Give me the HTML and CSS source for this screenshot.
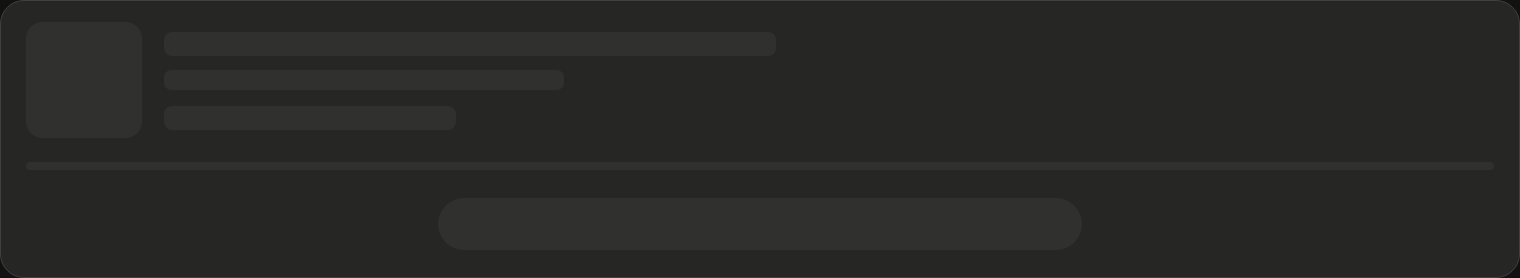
FILE: index.html
```html
<!DOCTYPE html>
<html lang="en">
<head>
<meta charset="utf-8">
<title>Loading</title>
<link rel="stylesheet" href="styles.css">
</head>
<body>
<div class="card" aria-busy="true">
  <div class="head">
    <div class="sk avatar"></div>
    <div class="lines">
      <div class="sk line l1"></div>
      <div class="sk line l2"></div>
      <div class="sk line l3"></div>
    </div>
  </div>
  <div class="sk divider"></div>
  <div class="actions">
    <div class="sk button"></div>
  </div>
</div>
</body>
</html>
```

FILE: styles.css
```css
html, body {
  margin: 0;
  padding: 0;
  background: #121212;
  font-family: "Liberation Sans", Arial, sans-serif;
}
.card {
  box-sizing: border-box;
  width: 1520px;
  height: 278px;
  background: #262624;
  border: 1px solid #41413f;
  border-radius: 24px;
  padding: 21px 25px 27px;
  display: flex;
  flex-direction: column;
}
.sk {
  background: #30302e;
}
.head {
  display: flex;
  align-items: flex-start;
  gap: 22px;
}
.avatar {
  width: 116px;
  height: 116px;
  border-radius: 16px;
  flex: none;
}
.lines {
  display: flex;
  flex-direction: column;
  padding-top: 10px;
}
.line {
  border-radius: 8px;
}
.l1 { width: 612px; height: 24px; }
.l2 { width: 400px; height: 20px; margin-top: 14px; border-radius: 7px; }
.l3 { width: 292px; height: 24px; margin-top: 16px; }
.divider {
  height: 8px;
  border-radius: 4px;
  margin-top: 24px;
}
.actions {
  display: flex;
  justify-content: center;
  margin-top: 28px;
}
.button {
  width: 644px;
  height: 52px;
  border-radius: 26px;
}
```
